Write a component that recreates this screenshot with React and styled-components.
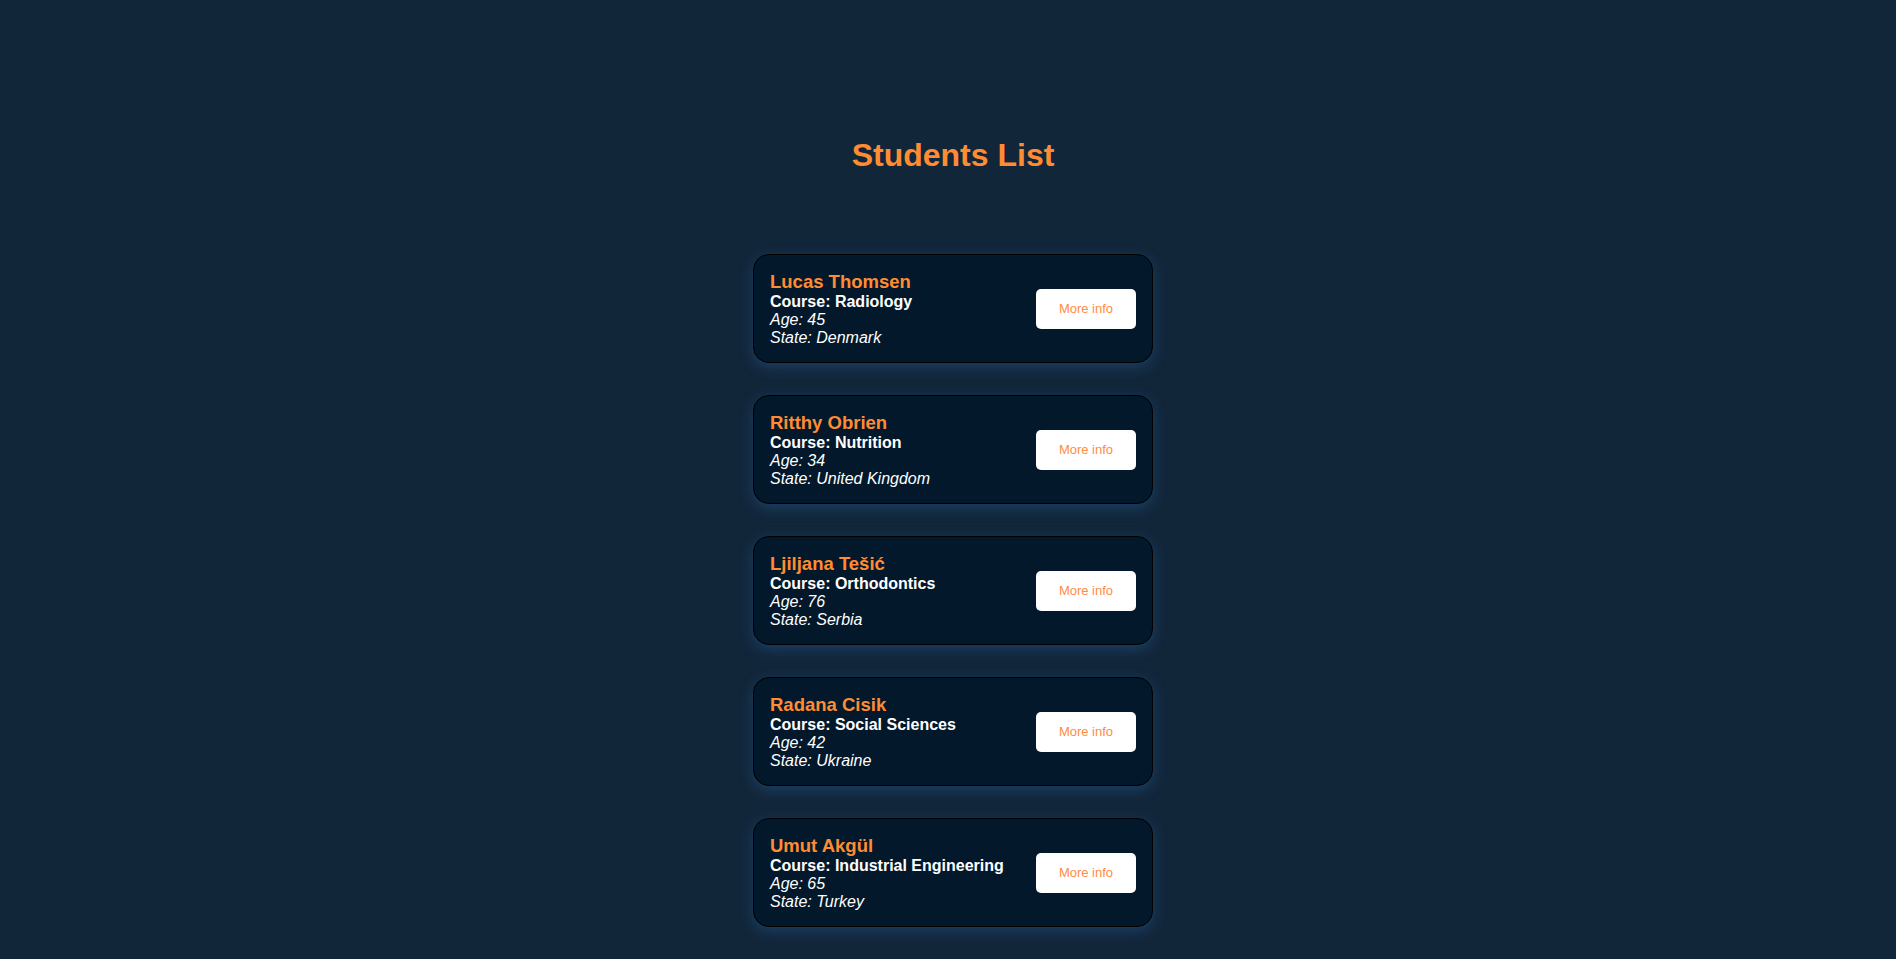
import React from "react";
import styled, { createGlobalStyle } from "styled-components";

const GlobalStyle = createGlobalStyle`
  html, body {
    margin: 0;
    padding: 0;
    background-color: #12263a;
    font-family: "Liberation Sans", Arial, Helvetica, sans-serif;
  }
`;

const students = [
  { name: "Lucas Thomsen", course: "Radiology", age: 45, state: "Denmark" },
  { name: "Ritthy Obrien", course: "Nutrition", age: 34, state: "United Kingdom" },
  { name: "Ljiljana Tešić", course: "Orthodontics", age: 76, state: "Serbia" },
  { name: "Radana Cisik", course: "Social Sciences", age: 42, state: "Ukraine" },
  { name: "Umut Akgül", course: "Industrial Engineering", age: 65, state: "Turkey" },
];

const Page = styled.div`
  min-height: 100vh;
  display: flex;
  flex-direction: column;
  align-items: center;
  padding: 116px 0 0 10px;
  box-sizing: border-box;
`;

const Title = styled.h1`
  margin: 21px 0 80px;
  font-size: 32px;
  font-weight: bold;
  color: #ff8c33;
`;

const List = styled.ul`
  list-style: none;
  margin: 0;
  padding: 0;
  display: flex;
  flex-direction: column;
  gap: 32px;
`;

const Card = styled.li`
  width: 400px;
  box-sizing: border-box;
  display: flex;
  align-items: center;
  justify-content: space-between;
  padding: 15.5px 16px;
  background-color: #03182a;
  border: 1px solid #000;
  border-radius: 16px;
  box-shadow: 0 4px 14px rgba(40, 95, 150, 0.45);
`;

const Info = styled.div`
  display: flex;
  flex-direction: column;
  color: #fff;
  font-size: 16px;
`;

const Name = styled.span`
  color: #ff8c33;
  font-size: 18.5px;
  font-weight: bold;
`;

const Course = styled.span`
  font-weight: bold;
`;

const Detail = styled.span`
  font-style: italic;
`;

const MoreButton = styled.button`
  width: 100px;
  height: 40px;
  border: none;
  border-radius: 5px;
  background-color: #fff;
  color: #ff8c42;
  font-family: "Liberation Sans", Arial, sans-serif;
  font-size: 13px;
  cursor: pointer;
`;

const App = () => {
  return (
    <Page>
      <GlobalStyle />
      <Title>Students List</Title>
      <List>
        {students.map((s) => (
          <Card key={s.name}>
            <Info>
              <Name>{s.name}</Name>
              <Course>Course: {s.course}</Course>
              <Detail>Age: {s.age}</Detail>
              <Detail>State: {s.state}</Detail>
            </Info>
            <MoreButton>More info</MoreButton>
          </Card>
        ))}
      </List>
    </Page>
  );
};

export default App;
